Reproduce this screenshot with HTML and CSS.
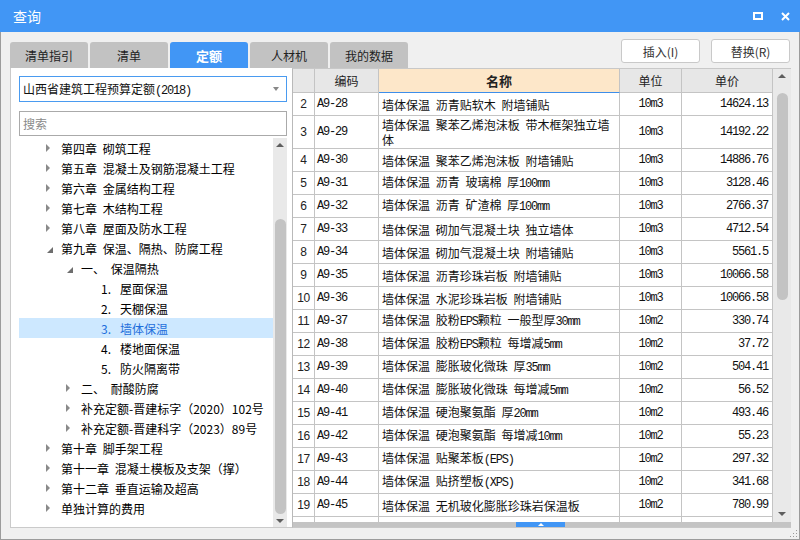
FILE: index.html
```html
<!DOCTYPE html>
<html lang="zh-CN">
<head>
<meta charset="utf-8">
<title>查询</title>
<link rel="stylesheet" href="styles.css">
</head>
<body>
<div class="window">
  <div class="titlebar">
    <span class="title">查询</span>
    <span class="tb-icons">
      <span class="max-icon"></span>
      <svg class="close-icon" width="9" height="9" viewBox="0 0 9 9"><path d="M1 1L8 8M8 1L1 8" stroke="#fff" stroke-width="2"/></svg>
    </span>
  </div>
  <div class="body">
    <div class="toolbar">
      <div class="tabs">
        <div class="tab">清单指引</div>
        <div class="tab">清单</div>
        <div class="tab active">定额</div>
        <div class="tab">人材机</div>
        <div class="tab">我的数据</div>
      </div>
      <div class="buttons">
        <button class="btn">插入(I)</button>
        <button class="btn">替换(R)</button>
      </div>
    </div>
    <div class="main">
      <div class="left">
        <div class="select"><span class="sel-text">山西省建筑工程预算定额<span class="m">(2018)</span></span><span class="caret"></span></div>
        <div class="search">搜索</div>
        <div class="tree-wrap">
          <div class="tree">
            <div class="row l0"><span class="arr"><i class="tri-r"></i></span><span>第四章 砌筑工程</span></div>
            <div class="row l0"><span class="arr"><i class="tri-r"></i></span><span>第五章 混凝土及钢筋混凝土工程</span></div>
            <div class="row l0"><span class="arr"><i class="tri-r"></i></span><span>第六章 金属结构工程</span></div>
            <div class="row l0"><span class="arr"><i class="tri-r"></i></span><span>第七章 木结构工程</span></div>
            <div class="row l0"><span class="arr"><i class="tri-r"></i></span><span>第八章 屋面及防水工程</span></div>
            <div class="row l0"><span class="arr"><i class="tri-d"></i></span><span>第九章 保温、隔热、防腐工程</span></div>
            <div class="row l1"><span class="arr"><i class="tri-d"></i></span><span>一、 保温隔热</span></div>
            <div class="row l2"><span class="arr"></span><span class="num">1.</span><span>屋面保温</span></div>
            <div class="row l2"><span class="arr"></span><span class="num">2.</span><span>天棚保温</span></div>
            <div class="row l2 selected"><span class="arr"></span><span class="num">3.</span><span>墙体保温</span></div>
            <div class="row l2"><span class="arr"></span><span class="num">4.</span><span>楼地面保温</span></div>
            <div class="row l2"><span class="arr"></span><span class="num">5.</span><span>防火隔离带</span></div>
            <div class="row l1"><span class="arr"><i class="tri-r"></i></span><span>二、 耐酸防腐</span></div>
            <div class="row l1"><span class="arr"><i class="tri-r"></i></span><span>补充定额-晋建标字（2020）102号</span></div>
            <div class="row l1"><span class="arr"><i class="tri-r"></i></span><span>补充定额-晋建科字（2023）89号</span></div>
            <div class="row l0"><span class="arr"><i class="tri-r"></i></span><span>第十章 脚手架工程</span></div>
            <div class="row l0"><span class="arr"><i class="tri-r"></i></span><span>第十一章 混凝土模板及支架（撑）</span></div>
            <div class="row l0"><span class="arr"><i class="tri-r"></i></span><span>第十二章 垂直运输及超高</span></div>
            <div class="row l0"><span class="arr"><i class="tri-r"></i></span><span>单独计算的费用</span></div>
          </div>
          <div class="vscroll tree-scroll">
            <i class="up"></i>
            <span class="thumb tree-thumb"></span>
            <i class="down"></i>
          </div>
        </div>
      </div>
      <div class="right">
        <div class="grid-wrap">
          <div class="grid">
            <div class="c h"></div><div class="c h">编码</div><div class="c h name-h">名称</div><div class="c h">单位</div><div class="c h">单价</div>

            <div class="c rn">2</div><div class="c code">A9-28</div><div class="c nm"><span class="t">墙体保温 沥青贴软木 附墙铺贴</span></div><div class="c un">10m3</div><div class="c pr">14624.13</div>
            <div class="c rn">3</div><div class="c code">A9-29</div><div class="c nm"><span class="t">墙体保温 聚苯乙烯泡沫板 带木框架独立墙<br>体</span></div><div class="c un">10m3</div><div class="c pr">14192.22</div>
            <div class="c rn">4</div><div class="c code">A9-30</div><div class="c nm"><span class="t">墙体保温 聚苯乙烯泡沫板 附墙铺贴</span></div><div class="c un">10m3</div><div class="c pr">14886.76</div>
            <div class="c rn">5</div><div class="c code">A9-31</div><div class="c nm"><span class="t">墙体保温 沥青 玻璃棉 厚<span class="m">100mm</span></span></div><div class="c un">10m3</div><div class="c pr">3128.46</div>
            <div class="c rn">6</div><div class="c code">A9-32</div><div class="c nm"><span class="t">墙体保温 沥青 矿渣棉 厚<span class="m">100mm</span></span></div><div class="c un">10m3</div><div class="c pr">2766.37</div>
            <div class="c rn">7</div><div class="c code">A9-33</div><div class="c nm"><span class="t">墙体保温 砌加气混凝土块 独立墙体</span></div><div class="c un">10m3</div><div class="c pr">4712.54</div>
            <div class="c rn">8</div><div class="c code">A9-34</div><div class="c nm"><span class="t">墙体保温 砌加气混凝土块 附墙铺贴</span></div><div class="c un">10m3</div><div class="c pr">5561.5</div>
            <div class="c rn">9</div><div class="c code">A9-35</div><div class="c nm"><span class="t">墙体保温 沥青珍珠岩板 附墙铺贴</span></div><div class="c un">10m3</div><div class="c pr">10066.58</div>
            <div class="c rn">10</div><div class="c code">A9-36</div><div class="c nm"><span class="t">墙体保温 水泥珍珠岩板 附墙铺贴</span></div><div class="c un">10m3</div><div class="c pr">10066.58</div>
            <div class="c rn">11</div><div class="c code">A9-37</div><div class="c nm"><span class="t">墙体保温 胶粉<span class="m">EPS</span>颗粒 一般型厚<span class="m">30mm</span></span></div><div class="c un">10m2</div><div class="c pr">330.74</div>
            <div class="c rn">12</div><div class="c code">A9-38</div><div class="c nm"><span class="t">墙体保温 胶粉<span class="m">EPS</span>颗粒 每增减<span class="m">5mm</span></span></div><div class="c un">10m2</div><div class="c pr">37.72</div>
            <div class="c rn">13</div><div class="c code">A9-39</div><div class="c nm"><span class="t">墙体保温 膨胀玻化微珠 厚<span class="m">35mm</span></span></div><div class="c un">10m2</div><div class="c pr">504.41</div>
            <div class="c rn">14</div><div class="c code">A9-40</div><div class="c nm"><span class="t">墙体保温 膨胀玻化微珠 每增减<span class="m">5mm</span></span></div><div class="c un">10m2</div><div class="c pr">56.52</div>
            <div class="c rn">15</div><div class="c code">A9-41</div><div class="c nm"><span class="t">墙体保温 硬泡聚氨酯 厚<span class="m">20mm</span></span></div><div class="c un">10m2</div><div class="c pr">493.46</div>
            <div class="c rn">16</div><div class="c code">A9-42</div><div class="c nm"><span class="t">墙体保温 硬泡聚氨酯 每增减<span class="m">10mm</span></span></div><div class="c un">10m2</div><div class="c pr">55.23</div>
            <div class="c rn">17</div><div class="c code">A9-43</div><div class="c nm"><span class="t">墙体保温 贴聚苯板<span class="m">(EPS)</span></span></div><div class="c un">10m2</div><div class="c pr">297.32</div>
            <div class="c rn">18</div><div class="c code">A9-44</div><div class="c nm"><span class="t">墙体保温 贴挤塑板<span class="m">(XPS)</span></span></div><div class="c un">10m2</div><div class="c pr">341.68</div>
            <div class="c rn">19</div><div class="c code">A9-45</div><div class="c nm"><span class="t">墙体保温 无机玻化膨胀珍珠岩保温板</span></div><div class="c un">10m2</div><div class="c pr">780.99</div>
            <div class="c rn"></div><div class="c code"></div><div class="c nm"></div><div class="c un"></div><div class="c pr"></div>
          </div>
          <div class="vscroll grid-scroll">
            <i class="up"></i>
            <span class="thumb grid-thumb"></span>
            <i class="down"></i>
          </div>
        </div>
        <div class="hscroll"><span class="hhandle"><i class="hup"></i></span></div>
      </div>
    </div>
    <svg class="grip" width="9" height="9" viewBox="0 0 9 9">
      <rect x="7" y="1" width="1" height="1" fill="#9a9a9a"/>
      <rect x="4" y="4" width="1" height="1" fill="#9a9a9a"/>
      <rect x="7" y="4" width="1" height="1" fill="#9a9a9a"/>
      <rect x="1" y="7" width="1" height="1" fill="#9a9a9a"/>
      <rect x="4" y="7" width="1" height="1" fill="#9a9a9a"/>
      <rect x="7" y="7" width="1" height="1" fill="#9a9a9a"/>
    </svg>
  </div>
</div>
</body>
</html>
```

FILE: styles.css
```css
* { box-sizing: border-box; margin: 0; padding: 0; }
html, body { width: 800px; height: 540px; overflow: hidden; }
body {
  font-family: "Noto Sans CJK SC", "Noto Sans", sans-serif;
  font-size: 12px;
  color: #111;
  background: #f0f0f0;
}
.window { width: 800px; height: 540px; display: flex; flex-direction: column; }

.titlebar {
  height: 32px;
  flex: none;
  background: #4196f5;
  display: flex;
  align-items: center;
  padding: 0 10px 0 13px;
  color: #fff;
}
.title { flex: 1; font-size: 14px; line-height: 16px; }
.tb-icons { display: flex; align-items: center; gap: 18px; }
.max-icon {
  display: block;
  width: 10px;
  height: 8px;
  border: 2px solid #fff;
}
.close-icon { display: block; }

.body {
  flex: 1;
  position: relative;
  border: 1px solid #9c9c9c;
  border-top: 0;
  padding: 0 8px 11px 9px;
  display: flex;
  flex-direction: column;
}
.toolbar { height: 36px; flex: none; display: flex; align-items: flex-end; }
.tabs { display: flex; gap: 2px; }
.tab {
  width: 78px;
  height: 26px;
  background: #c2c2c2;
  border-radius: 3px 3px 0 0;
  display: flex;
  align-items: center;
  justify-content: center;
  font-size: 12px;
  color: #222;
}
.tab.active { background: #4196f5; color: #fff; font-weight: bold; font-size: 13px; }
.buttons {
  margin-left: auto;
  align-self: flex-start;
  margin-top: 7px;
  margin-right: 1px;
  display: flex;
  gap: 11px;
}
.btn {
  width: 79px;
  height: 24px;
  border: 1px solid #c9c9c9;
  border-radius: 3px;
  background: #fff;
  font-family: "Noto Sans CJK SC", "Noto Sans", sans-serif;
  font-size: 12px;
  color: #333;
}

.main { height: 460px; flex: none; display: flex; }
.left {
  width: 282px;
  background: #fff;
  border-left: 1px solid #cacaca;
  border-bottom: 1px solid #cacaca;
  padding: 8px 5px 0 8px;
  display: flex;
  flex-direction: column;
}
.select {
  height: 26px;
  flex: none;
  border: 1px solid #4a9bf0;
  display: flex;
  align-items: center;
  padding: 0 7px 0 3px;
}
.sel-text { flex: 1; white-space: nowrap; }
.caret {
  width: 0; height: 0;
  border-top: 4px solid #888;
  border-left: 3px solid transparent;
  border-right: 3px solid transparent;
}
.search {
  height: 25px;
  flex: none;
  margin-top: 9px;
  border: 1px solid #aaa;
  padding-left: 3px;
  line-height: 23px;
  color: #8a8a8a;
}
.tree-wrap { flex: 1; margin-top: 2px; display: flex; overflow: hidden; }
.tree { flex: 1; overflow: hidden; }
.row {
  height: 20px;
  display: flex;
  align-items: center;
  white-space: nowrap;
  word-spacing: 3px;
  color: #000;
}
.row.l0 { padding-left: 24px; }
.row.l1 { padding-left: 44px; }
.row.l2 { padding-left: 64px; }
.row.selected { background: #cde8ff; color: #1e6fdc; }
.arr { width: 18px; flex: none; display: flex; align-items: center; padding-left: 3px; }
.num { width: 19px; flex: none; }
.tri-r {
  display: block;
  width: 0; height: 0;
  border-left: 4px solid #8a8a8a;
  border-top: 4px solid transparent;
  border-bottom: 4px solid transparent;
}
.tri-d {
  display: block;
  margin-left: 1px;
  margin-top: 3px;
  width: 0; height: 0;
  border-bottom: 6px solid #6e6e6e;
  border-left: 6px solid transparent;
}

.vscroll {
  flex: none;
  background: #e9e9e9;
  display: flex;
  flex-direction: column;
  align-items: center;
}
.vscroll .up {
  display: block;
  width: 0; height: 0;
  border-bottom: 4px solid #5e5e5e;
  border-left: 4px solid transparent;
  border-right: 4px solid transparent;
}
.vscroll .down {
  display: block;
  width: 0; height: 0;
  border-top: 4px solid #5e5e5e;
  border-left: 4px solid transparent;
  border-right: 4px solid transparent;
}
.thumb { display: block; background: #c3c3c3; border-radius: 6px; }
.tree-scroll { width: 14px; }
.tree-scroll .up { margin-top: 5px; }
.tree-thumb { width: 11px; height: 295px; margin-top: 72px; }
.tree-scroll .down { margin-top: 5px; }
.grid-scroll { width: 18px; }
.grid-scroll .up { margin-top: 5px; }
.grid-thumb { width: 11px; height: 207px; margin-top: 15px; }
.grid-scroll .down { margin-top: 212px; }

.right {
  width: 499px;
  background: #fff;
  border-left: 1px solid #b9b9b9;
  border-top: 1px solid #c8c8c8;
  border-bottom: 1px solid #c8c8c8;
  display: flex;
  flex-direction: column;
}
.grid-wrap { flex: 1; display: flex; overflow: hidden; }
.grid {
  width: 480px;
  flex: none;
  display: grid;
  grid-template-columns: 22px 64px 241px 62px 91px;
  grid-template-rows: 24px 23px 33px repeat(17, 23px);
  align-content: start;
}
.c {
  border-right: 1px solid #c4c4c4;
  border-bottom: 1px solid #c4c4c4;
  display: flex;
  align-items: center;
  overflow: hidden;
  white-space: nowrap;
}
.h { background: #e7e7e7; justify-content: center; color: #222; }
.name-h { background: #fde7c9; border-bottom-color: #3d8eea; font-weight: bold; font-size: 13px; }
.rn { justify-content: center; font-family: "Liberation Sans", sans-serif; font-size: 12px; letter-spacing: -0.3px; color: #222; }
.code, .un, .pr, .m {
  font-family: "Liberation Mono", monospace;
  font-size: 12px;
  letter-spacing: -1.2px;
}
.code { padding-left: 2px; }
.un { justify-content: center; }
.pr { justify-content: flex-end; padding-right: 4px; }
.nm { padding-left: 3px; }
.t { display: block; word-spacing: 3px; white-space: nowrap; line-height: 15px; }
.m { word-spacing: 0; }

.hscroll { height: 5px; flex: none; background: #c4c4c4; padding-left: 223px; display: flex; }
.hhandle {
  width: 49px;
  height: 5px;
  background: #4196f5;
  display: flex;
  justify-content: center;
  align-items: center;
}
.hup {
  display: block;
  width: 0; height: 0;
  border-bottom: 3px solid #fff;
  border-left: 3px solid transparent;
  border-right: 3px solid transparent;
}
.grip { position: absolute; right: 1px; bottom: 1px; }
```
